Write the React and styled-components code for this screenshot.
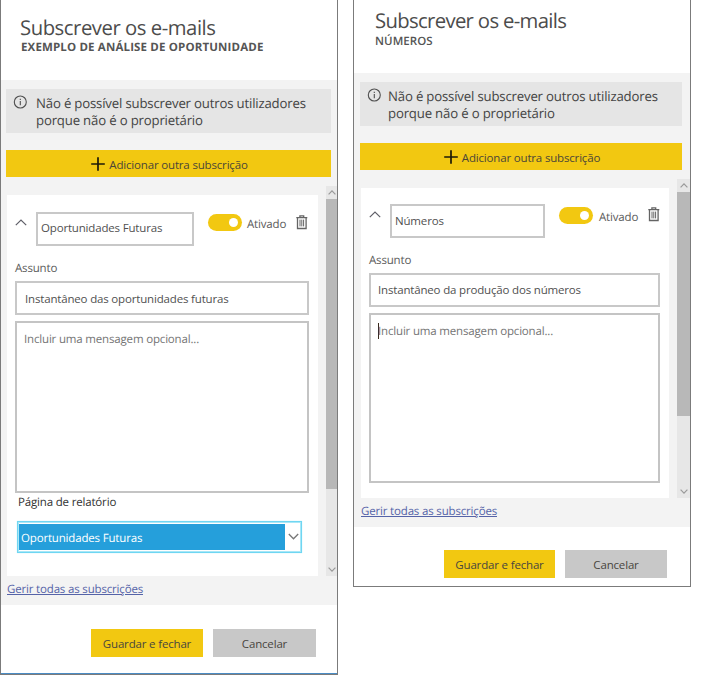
import React from "react";
import styled, { createGlobalStyle, css } from "styled-components";

const GlobalStyle = createGlobalStyle`
  * { box-sizing: border-box; }
  body {
    margin: 0;
    background: #fff;
    color: #505050;
    font-family: "Open Sans", "Noto Sans", sans-serif;
    font-size: 11.5px;
    line-height: 16px;
    letter-spacing: -0.17px;
    text-rendering: geometricPrecision;
  }
  button, input, textarea { font: inherit; letter-spacing: inherit; color: inherit; }
  svg { display: block; flex: none; }
`;

const Page = styled.main`
  display: flex;
  align-items: flex-start;
  gap: 15px;
  width: 701px;
  height: 675px;
  overflow: hidden;
`;

const Panel = styled.section`
  display: flex;
  flex-direction: column;
  width: 338px;
  height: ${(p) => p.$height}px;
  border: 1px solid #7b7b7b;
  border-top: 0;
  ${(p) => p.$accent && css`box-shadow: inset 0 -1px #4a8cc4;`}
`;

const Header = styled.header`
  height: ${(p) => p.$height}px;
  padding: ${(p) => p.$top}px 0 0 ${(p) => p.$left}px;
  flex: none;
`;

const Title = styled.h1`
  margin: 0;
  font-size: 20.3px;
  font-weight: 400;
  line-height: 26px;
  letter-spacing: ${(p) => p.$tracking}px;
  color: #4c4c4c;
  white-space: nowrap;
`;

const Subtitle = styled.h2`
  margin: ${(p) => p.$top}px 0 0 ${(p) => p.$indent}px;
  font-size: 11.5px;
  font-weight: ${(p) => p.$weight};
  line-height: 14px;
  letter-spacing: ${(p) => p.$tracking}px;
  color: #555;
  white-space: nowrap;
`;

const Body = styled.div`
  display: flex;
  flex-direction: column;
  height: ${(p) => p.$height}px;
  padding: 9px 0 0 ${(p) => p.$pad}px;
  background: #f3f3f3;
  flex: none;
`;

const Notice = styled.div`
  display: flex;
  gap: ${(p) => p.$gap}px;
  width: ${(p) => p.$width}px;
  height: 44px;
  padding: 6px 0 0 7px;
  background: #e5e5e5;
  color: #444;
  font-size: 13.2px;
  line-height: 17px;
  letter-spacing: -0.18px;
  white-space: nowrap;
`;

const NoticeText = styled.p`
  margin: 0;
`;

const AddButton = styled.button`
  display: flex;
  align-items: center;
  justify-content: center;
  gap: 4px;
  width: ${(p) => p.$width}px;
  height: 27px;
  margin: 17px 0 9px;
  padding: 0 0 0 2px;
  border: 0;
  background: #f2c811;
  color: #4b4638;
  flex: none;
`;

const AddText = styled.span`
  padding-top: 3px;
`;

const ScrollArea = styled.div`
  display: flex;
  justify-content: space-between;
  height: ${(p) => p.$height}px;
  padding-left: 1px;
  flex: none;
`;

const Card = styled.div`
  width: ${(p) => p.$width}px;
  height: ${(p) => p.$height}px;
  margin-top: ${(p) => p.$top}px;
  padding: ${(p) => p.$padTop}px 0 0 8px;
  background: #fff;
`;

const NameRow = styled.div`
  display: flex;
  align-items: flex-start;
`;

const Chevron = styled.svg`
  margin: 7px 9px 0 0;
`;

const Field = styled.input`
  display: block;
  width: ${(p) => p.$width}px;
  height: 34px;
  padding: ${(p) => p.$pad};
  border: 2px solid #c8c8c8;
  border-radius: 0;
  background: #fff;
  outline: 0;
`;

const Toggle = styled.span`
  display: flex;
  justify-content: flex-end;
  align-items: center;
  width: 34px;
  height: 17px;
  margin: ${(p) => p.$margin};
  padding-right: 4px;
  border-radius: 9px;
  background: #f2c811;
  flex: none;

  &::after {
    content: "";
    width: 9px;
    height: 9px;
    border-radius: 50%;
    background: #fff;
  }
`;

const ToggleLabel = styled.span`
  width: 49px;
  margin-top: ${(p) => p.$top}px;
  color: #5c5c5c;
`;

const Trash = styled.svg`
  margin-top: 3px;
`;

const Label = styled.label`
  display: block;
  margin: ${(p) => p.$margin};
  color: ${(p) => (p.$dark ? "#333" : "#5c5c5c")};
`;

const MessageBox = styled.div`
  display: flex;
  width: ${(p) => p.$width}px;
  height: ${(p) => p.$height}px;
  margin-top: ${(p) => p.$top}px;
  padding: ${(p) => p.$padTop}px 7px 0;
  border: 2px solid #c4c4c4;
  background: #fff;
  color: #757575;
  line-height: 16px;
`;

const Caret = styled.span`
  width: 1px;
  height: 16px;
  margin: -1px -1px 0 0;
  background: #3a2a1c;
`;

const Select = styled.div`
  display: flex;
  width: 285px;
  height: 32px;
  margin: 10px 0 0 2px;
  padding: 1px 0;
  border: 1px solid #6fd6f2;
  box-shadow: inset 0 0 0 1px #a9e7f7, 0 0 1px #b9edfa;
`;

const SelectValue = styled.span`
  width: 266px;
  margin: 1px 0 1px 1px;
  padding: 7px 0 0 2px;
  background: #259fdb;
  color: #fff;
`;

const SelectArrow = styled.svg`
  margin: 9px 0 0 3px;
`;

const Scrollbar = styled.div`
  display: flex;
  flex-direction: column;
  width: ${(p) => p.$width}px;
  height: 100%;
  background: #e7e7e7;
`;

const ScrollThumb = styled.div`
  height: ${(p) => p.$height}px;
  background: #b8b8b8;
`;

const ScrollButton = styled.div`
  display: flex;
  align-items: center;
  justify-content: center;
  height: 13px;
  padding-left: 1px;
  ${(p) => p.$end && css`margin-top: auto;`}
`;

const ManageLink = styled.a`
  align-self: flex-start;
  margin: 6px 0 0 1px;
  color: #5563a8;
  text-decoration: underline;
  text-underline-offset: 1px;
`;

const Footer = styled.footer`
  display: flex;
  gap: 10px;
  padding: ${(p) => p.$top}px 0 0 90px;
`;

const Button = styled.button`
  width: ${(p) => p.$width}px;
  height: 28px;
  padding: 2px 0 0;
  border: 0;
  background: ${(p) => (p.$primary ? "#f2c811" : "#c8c8c8")};
  color: #48463f;
`;

function InfoIcon() {
  return (
    <svg width="15" height="15" viewBox="0 0 15 15" fill="none" stroke="#505050">
      <circle cx="7.3" cy="7" r="6" strokeWidth="1.1" />
      <path d="M7.3 6v4.2M7.3 3.8v1.2" strokeWidth="1.1" />
    </svg>
  );
}

function PlusIcon() {
  return (
    <svg width="14" height="14" viewBox="0 0 14 14" stroke="#1d1a08" strokeWidth="1.7">
      <path d="M7 0.2v13.6M0.2 7h13.6" />
    </svg>
  );
}

function TrashIcon() {
  return (
    <Trash width="12" height="15" viewBox="0 0 12 15" fill="none" stroke="#646464">
      <path d="M0.3 2.6h11M3.9 2.6V0.9h3.8V2.6M1.5 2.6v10.9h8.6V2.6" strokeWidth="1.3" />
      <path d="M4 4.6v6.8M5.8 4.6v6.8M7.6 4.6v6.8" strokeWidth="1" />
    </Trash>
  );
}

function ScrollArrow({ down }) {
  return (
    <svg width="8" height="5" viewBox="0 0 8 5" fill="none" stroke="#999" strokeWidth="1.2">
      <path d={down ? "M0.6 0.7L4 4.1L7.4 0.7" : "M0.6 4.3L4 0.9L7.4 4.3"} />
    </svg>
  );
}

const PANELS = [
  {
    id: "opportunity",
    height: 675,
    accent: true,
    header: { height: 80, top: 14, left: 19 },
    titleTracking: -0.46,
    subtitle: "EXEMPLO DE ANÁLISE DE OPORTUNIDADE",
    subtitleStyle: { top: 1, indent: 1, weight: 700, tracking: 0.15 },
    body: { height: 525, pad: 5, width: 325, noticeGap: 8 },
    scroll: { height: 390, width: 11, thumb: 290 },
    card: { width: 311, height: 381, top: 9, padTop: 17 },
    name: { text: "Oportunidades Futuras", width: 158, pad: "0 3px 3px" },
    toggle: { margin: "2px 5px 0 14px", top: 5 },
    subjectMargin: "15px 0 4px 0",
    fieldWidth: 294,
    subject: "Instantâneo das oportunidades futuras",
    subjectPad: "0 8px",
    message: { height: 172, top: 6, padTop: 9 },
    page: "Oportunidades Futuras",
    footerTop: 24,
    buttons: [112, 103],
  },
  {
    id: "numbers",
    height: 587,
    header: { height: 73, top: 7, left: 21 },
    titleTracking: -0.66,
    subtitle: "NÚMEROS",
    subtitleStyle: { top: 2, indent: 0, weight: 600, tracking: 0.05 },
    body: { height: 454, pad: 6, width: 322, noticeGap: 6 },
    scroll: { height: 319, width: 13, thumb: 224 },
    card: { width: 308, height: 310, top: 9, padTop: 16 },
    name: { text: "Números", width: 155, pad: "0 3px 1px" },
    toggle: { margin: "3px 6px 0 14px", top: 6 },
    subjectMargin: "15px 0 4px 0",
    fieldWidth: 291,
    subject: "Instantâneo da produção dos números",
    subjectPad: "0 7px 1px",
    message: { height: 170, top: 6, padTop: 9, caret: true },
    footerTop: 23,
    buttons: [111, 102],
  },
];

function SubscriptionPanel({ p }) {
  return (
    <Panel $height={p.height} $accent={p.accent}>
      <Header $height={p.header.height} $top={p.header.top} $left={p.header.left}>
        <Title $tracking={p.titleTracking}>Subscrever os e-mails</Title>
        <Subtitle
          $top={p.subtitleStyle.top}
          $indent={p.subtitleStyle.indent}
          $weight={p.subtitleStyle.weight}
          $tracking={p.subtitleStyle.tracking}
        >
          {p.subtitle}
        </Subtitle>
      </Header>
      <Body $height={p.body.height} $pad={p.body.pad}>
        <Notice $width={p.body.width} $gap={p.body.noticeGap}>
          <InfoIcon />
          <NoticeText>
            Não é possível subscrever outros utilizadores
            <br />
            porque não é o proprietário
          </NoticeText>
        </Notice>
        <AddButton $width={p.body.width}>
          <PlusIcon />
          <AddText>Adicionar outra subscrição</AddText>
        </AddButton>
        <ScrollArea $height={p.scroll.height}>
          <Card
            $width={p.card.width}
            $height={p.card.height}
            $top={p.card.top}
            $padTop={p.card.padTop}
          >
            <NameRow>
              <Chevron width="12" height="7" viewBox="0 0 12 7" fill="none" stroke="#5f5f68" strokeWidth="1.2">
                <path d="M0.8 6.2L6 1L11.2 6.2" />
              </Chevron>
              <Field readOnly value={p.name.text} $width={p.name.width} $pad={p.name.pad} />
              <Toggle $margin={p.toggle.margin} />
              <ToggleLabel $top={p.toggle.top}>Ativado</ToggleLabel>
              <TrashIcon />
            </NameRow>
            <Label $margin={p.subjectMargin}>Assunto</Label>
            <Field readOnly value={p.subject} $width={p.fieldWidth} $pad={p.subjectPad} />
            <MessageBox
              $width={p.fieldWidth}
              $height={p.message.height}
              $top={p.message.top}
              $padTop={p.message.padTop}
            >
              {p.message.caret && <Caret />}
              Incluir uma mensagem opcional...
            </MessageBox>
            {p.page && (
              <>
                <Label $dark $margin="2px 0 0 3px">
                  Página de relatório
                </Label>
                <Select>
                  <SelectValue>{p.page}</SelectValue>
                  <SelectArrow width="11" height="9" viewBox="0 0 11 9" fill="none" stroke="#777" strokeWidth="1.3">
                    <path d="M0.8 2L5.5 6.8L10.2 2" />
                  </SelectArrow>
                </Select>
              </>
            )}
          </Card>
          <Scrollbar $width={p.scroll.width}>
            <ScrollButton>
              <ScrollArrow />
            </ScrollButton>
            <ScrollThumb $height={p.scroll.thumb} />
            <ScrollButton $end>
              <ScrollArrow down />
            </ScrollButton>
          </Scrollbar>
        </ScrollArea>
        <ManageLink>Gerir todas as subscrições</ManageLink>
      </Body>
      <Footer $top={p.footerTop}>
        <Button $primary $width={p.buttons[0]}>
          Guardar e fechar
        </Button>
        <Button $width={p.buttons[1]}>Cancelar</Button>
      </Footer>
    </Panel>
  );
}

export default function App() {
  return (
    <>
      <GlobalStyle />
      <Page>
        {PANELS.map((p) => (
          <SubscriptionPanel key={p.id} p={p} />
        ))}
      </Page>
    </>
  );
}
